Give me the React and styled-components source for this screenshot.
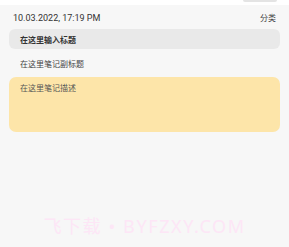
import React from "react";
import styled, { createGlobalStyle } from "styled-components";

const Global = createGlobalStyle`
  html, body { margin: 0; padding: 0; background: #f7f7f7; }
  body { font-family: Roboto, "Noto Sans", "Noto Sans CJK SC", sans-serif; }
`;

const Page = styled.div`
  width: 289px;
  height: 247px;
  background: #f7f7f7;
  display: flex;
  flex-direction: column;
  position: relative;
  overflow: hidden;
`;

const TopBand = styled.div`
  height: 5px;
  background: #ffffff;
  position: relative;
`;

const Handle = styled.div`
  position: absolute;
  right: 12px;
  top: -2px;
  width: 34px;
  height: 4px;
  border-radius: 2px;
  background: #e4e4e4;
`;

const Content = styled.div`
  display: flex;
  flex-direction: column;
  padding: 0 9px;
`;

const Header = styled.div`
  display: flex;
  justify-content: space-between;
  align-items: center;
  height: 23px;
  padding: 1px 4px 0 4px;
  font-size: 9px;
  color: #333;
`;

const Category = styled.span`
  font-family: "Noto Sans CJK SC", sans-serif;
  font-size: 8px;
  color: #444;
`;

const TitleField = styled.div`
  height: 20px;
  border-radius: 6px;
  background: #e9e9e9;
  display: flex;
  align-items: center;
  padding-left: 11px;
  font-family: "Noto Sans CJK SC", sans-serif;
  font-size: 8px;
  font-weight: 700;
  color: #333;
`;

const SubTitle = styled.div`
  height: 28px;
  display: flex;
  align-items: center;
  padding-left: 11px;
  font-family: "Noto Sans CJK SC", sans-serif;
  font-size: 8px;
  color: #444;
`;

const Note = styled.div`
  height: 55px;
  border-radius: 7px;
  background: #fde5a9;
  padding: 5px 11px;
  box-sizing: border-box;
  font-family: "Noto Sans CJK SC", sans-serif;
  font-size: 8px;
  color: #555;
`;

const Watermark = styled.div`
  position: absolute;
  left: 0;
  right: 0;
  top: 212px;
  text-align: center;
  font-family: "Noto Sans", "Noto Sans CJK SC", sans-serif;
  font-size: 18px;
  color: #fde6f6;
  letter-spacing: 1.6px;
  white-space: nowrap;
`;

export default function App() {
  return (
    <>
      <Global />
      <Page>
        <TopBand>
          <Handle />
        </TopBand>
        <Content>
          <Header>
            <span>10.03.2022, 17:19 PM</span>
            <Category>分类</Category>
          </Header>
          <TitleField>在这里输入标题</TitleField>
          <SubTitle>在这里笔记副标题</SubTitle>
          <Note>在这里笔记描述</Note>
        </Content>
        <Watermark>飞下载 • BYFZXY.COM</Watermark>
      </Page>
    </>
  );
}
